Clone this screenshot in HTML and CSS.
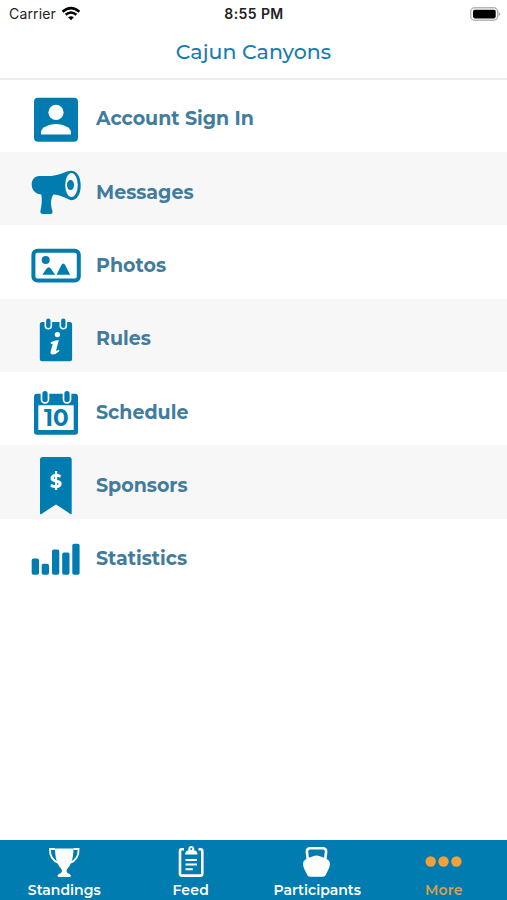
FILE: index.html
```html
<!DOCTYPE html>
<html lang="en">
<head>
<meta charset="utf-8">
<meta name="viewport" content="width=device-width">
<title>Cajun Canyons</title>
<link rel="stylesheet" href="styles.css">
</head>
<body>
<div class="app">
  <header class="header">
    <div class="status">
      <div class="carrier"><span>Carrier</span>
        <svg width="20" height="16" viewBox="61 5 20 16" fill="none" stroke="#000" stroke-width="2.5"><path d="M62.6 10.7Q71 3.5 79.4 10.7M65.6 13.7Q71 9.3 76.4 13.7"/><path d="M68.1 16.3Q71 14.2 73.9 16.3L71 19.2Z" fill="#000" stroke="none"/></svg>
      </div>
      <time class="clock">8:55 PM</time>
      <svg class="battery" width="32" height="16" viewBox="469 5 32 16"><rect x="470.7" y="6.7" width="27" height="12.6" rx="4" fill="#fff" stroke="#b5b5b5" stroke-width="1.4"/><rect x="473" y="8.8" width="22.7" height="8.6" rx="1.8"/><path d="M498.7 11.2Q502.4 13 498.7 15Z" fill="#aaa"/></svg>
    </div>
    <h1 class="title">Cajun Canyons</h1>
  </header>
  <nav class="menu">
    <a class="row"><svg class="icon" viewBox="24 78.600 64 73"><rect x="34" y="97.3" width="44" height="44" rx="4"/><g fill="#fff"><circle cx="56" cy="112" r="7.6"/><path d="M41 134v-2.3c0-5 9.2-8 15-8s15 3 15 8v2.3z"/></g></svg><span class="label">Account Sign In</span></a>
    <a class="row"><svg class="icon" viewBox="24 151.900 64 73"><path d="M39 176h10C56 176 62 173 67 171.4 75 168.500 80.700 174.500 80.700 185.500 80.700 196 75.500 202 69 199.500 64 197 59 194.300 53.300 194.300 50.400 199 50.600 205 52.300 210.500 53 213 52.200 214 50 214H43C40.700 214 40 212.500 40.500 210.500 41.800 205 42.200 199 41.300 194.500L38.500 193.800C35 193 31.700 189.500 31.700 184.500 31.700 179.500 35 176 39 176Z"/><ellipse cx="71.500" cy="185" rx="6.3" ry="12" fill="#f7f7f7"/><ellipse cx="70.500" cy="185" rx="3.500" ry="5"/></svg><span class="label">Messages</span></a>
    <a class="row"><svg class="icon" viewBox="24 225.300 64 73"><rect x="33.400" y="251.100" width="45.400" height="29.800" rx="4" fill="#fff" stroke="#007cb0" stroke-width="4"/><circle cx="45.700" cy="260.200" r="4"/><path d="M42.300 275 46.300 269.200Q48.700 266 51.100 269.200L55.200 275ZM56.600 275 61 266Q63.300 261.800 65.600 266L70.100 275Z"/></svg><span class="label">Photos</span></a>
    <a class="row"><svg class="icon" viewBox="24 298.600 64 73"><rect x="39.800" y="321.500" width="32.300" height="39.300" rx="2.500"/><g fill="#007cb0" stroke="#f7f7f7" stroke-width="1.600"><rect x="45.300" y="317.300" width="6" height="11" rx="3"/><rect x="60.300" y="317.300" width="6" height="11" rx="3"/></g><circle cx="57.400" cy="334.200" r="2.700" fill="#fff"/><path d="M50.800 341.900Q54.500 339.900 58.800 339.600L56.200 349.700Q55.900 351.300 58.900 349.300L59.500 350.600Q55.700 354.400 52.200 354.100 49.900 353.500 50.700 350.900L52.800 343.300 50.900 343.500Z" fill="#fff"/></svg><span class="label">Rules</span></a>
    <a class="row"><svg class="icon" viewBox="24 371.900 64 73"><rect x="34" y="393.600" width="44" height="41" rx="3"/><path d="M38.300 405.200h35.400v24.600H38.300z" fill="#fff"/><g stroke="#fff" stroke-width="1.700"><rect x="41.500" y="390" width="7" height="12.800" rx="3.500"/><rect x="63.500" y="390" width="7" height="12.800" rx="3.500"/></g><text class="date" x="56.200" y="425.700" text-anchor="middle">10</text></svg><span class="label">Schedule</span></a>
    <a class="row"><svg class="icon" viewBox="24 445.300 64 73"><path d="M40 460Q40 457.300 42.700 457.300H69Q71.700 457.300 71.700 460V513.500Q71.700 515.200 70.400 514.200L56 504.700 41.500 514.200Q40 515.200 40 513.500Z"/><text class="dollar" x="55.800" y="488" text-anchor="middle">$</text></svg><span class="label">Sponsors</span></a>
    <a class="row"><svg class="icon" viewBox="24 518.600 64 73"><rect x="31.700" y="558" width="7.300" height="16.300" rx="1.800"/><rect x="41.700" y="563.300" width="7.300" height="11" rx="1.800"/><rect x="52" y="549.200" width="7.300" height="25.100" rx="1.800"/><rect x="62.200" y="552" width="7.300" height="22.300" rx="1.800"/><rect x="72.300" y="543.400" width="7.300" height="30.900" rx="1.800"/></svg><span class="label">Statistics</span></a>
  </nav>
  <nav class="tabs">
    <a class="tab"><svg width="40" height="36" viewBox="44 844 40 36"><path d="M55 848.500H73.500Q73.300 857 71.500 862 69.500 867 66.800 869.500 66 871.500 67.500 873L70 874.200Q72 876.500 69.500 876.900H59Q56.300 876.500 58.500 874.200L61 873Q62.500 871.500 61.700 869.500 59 867 57 862 55.200 857 55 848.500Z"/><path d="M55 849H49.900Q49.600 859.500 58.600 863M73.500 849H78.600Q78.900 859.500 69.900 863" fill="none" stroke="#fff" stroke-width="1.800"/></svg><span>Standings</span></a>
    <a class="tab"><svg width="40" height="36" viewBox="171 844 40 36"><rect x="180" y="849.300" width="22.300" height="26.300" rx="1.800" fill="none" stroke="#fff" stroke-width="2.600"/><path d="M184 847.800h14.500v6.500H184z" fill="#007cb0"/><path d="M185 854.400Q185.500 850.800 188.300 850.600 188 846 191.300 846T194.300 850.600Q197.100 850.800 197.600 854.400Z"/><circle cx="191.300" cy="849" r="1" fill="#007cb0"/><path d="M185.500 860h11.500M185.500 864.500h11.500M185.500 869.200h7.300" stroke="#fff" stroke-width="1.900"/></svg><span class="short">Feed</span></a>
    <a class="tab"><svg width="40" height="36" viewBox="297 844 40 36"><path d="M308 861 306.900 852Q306.600 848.300 310.500 848.300H322.500Q326.400 848.300 326.100 852L325 861" fill="none" stroke="#fff" stroke-width="2.600"/><path d="M303.200 862.600Q303.300 860.500 306 859.200 313.500 855.600 316.500 855.600T327 859.200Q329.700 860.500 329.800 862.600C330.500 867 327.700 871 325.800 874.900Q324.900 876.700 323 876.700H310Q308.100 876.700 307.200 874.900C305.300 871 302.500 867 303.200 862.600Z"/></svg><span>Participants</span></a>
    <a class="tab active"><svg width="40" height="36" viewBox="424 844 40 36"><circle cx="430.700" cy="861.500" r="5.200"/><circle cx="443.500" cy="861.500" r="5.200"/><circle cx="456.400" cy="861.500" r="5.200"/></svg><span class="short">More</span></a>
  </nav>
</div>
</body>
</html>
```
FILE: styles.css
```css
* { box-sizing: border-box; }
body { margin: 0; background: #fff; font-family: Montserrat, Inter, sans-serif; }
.app { height: 900px; display: flex; flex-direction: column; overflow: hidden; }
.header { height: 80px; flex: none; border-bottom: 2px solid #ededed; }
.status { height: 27px; padding: 0 6px 0 9px; display: grid; grid-template-columns: 1fr auto 1fr; align-items: center; font: 14px/20px Inter, sans-serif; color: #222; }
.carrier { display: flex; align-items: center; gap: 5px; }
.carrier span { letter-spacing: .15px; }
.clock { font-weight: 600; letter-spacing: .4px; margin-right: 2px; }
.battery { justify-self: end; }
.title { margin: 11px 0 0; font-size: 20.500px; line-height: 28px; font-weight: 500; text-align: center; color: #197caf; letter-spacing: .05px; }
.menu { flex: 1; margin-top: -1.400px; }
.row { height: 73.330px; padding-left: 24px; display: flex; align-items: center; gap: 8px; }
.row:nth-child(even) { background: #f7f7f7; }
.icon { width: 64px; height: 73px; flex: none; fill: #007cb0; }
.date { font-size: 23px; font-weight: 700; }
.dollar { font-size: 19px; font-weight: 700; fill: #fff; }
.label { color: #417c9d; font-size: 19px; line-height: 26px; font-weight: 700; padding-top: 8px; }
.tabs { height: 60px; flex: none; padding-left: 1px; display: grid; grid-template-columns: repeat(4, 1fr); background: #007cb0; color: #fff; }
.tab { display: flex; flex-direction: column; align-items: center; padding-top: 4px; font-size: 14px; line-height: 20px; font-weight: 600; fill: #fff; }
.tab svg { display: block; flex: none; }
.short { letter-spacing: .2px; }
.active { color: #d6a052; fill: #f1a03c; }
```
